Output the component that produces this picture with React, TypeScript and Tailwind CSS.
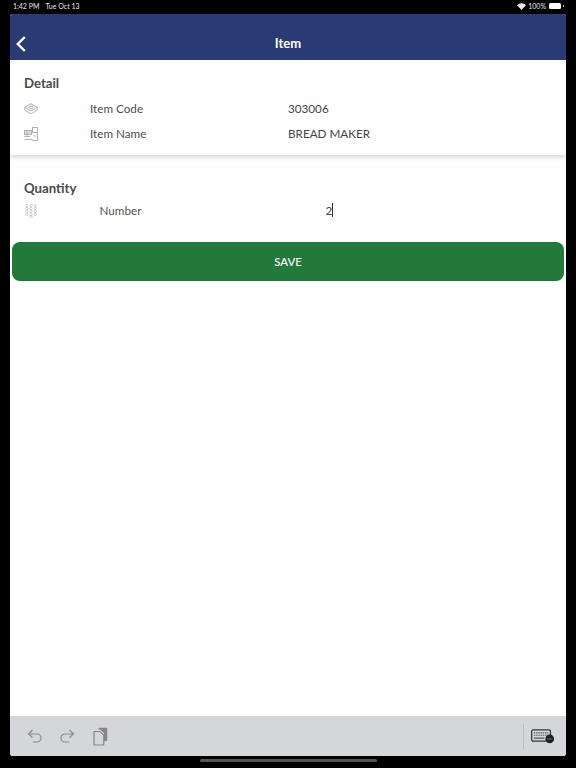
import React from "react";

const CodeIcon = () => (
  <svg width="14" height="12" viewBox="0 0 14 12" fill="none" stroke="#bdbdbd" strokeWidth="1">
    <path d="M7 .8 13.3 4.3 7 7.8.7 4.3Z" fill="#eeeeee" />
    <path d="M.7 4.3v3L7 10.9l6.3-3.6v-3" fill="#f4f4f4" />
    <path d="M7 .8 13.3 4.3 7 7.8.7 4.3Z" fill="#eeeeee" />
    <ellipse cx="7" cy="4.3" rx="2" ry="1.1" />
  </svg>
);

const NameIcon = () => (
  <svg width="14" height="14" viewBox="0 0 14 14" fill="none" stroke="#b0b0b0" strokeWidth="1">
    <rect x="8.5" y=".5" width="5" height="5" />
    <path d="M8.5 5.5h5v8h-5M11 8v2" />
    <rect x=".5" y="3.5" width="7" height="4" fill="#dddddd" />
    <path d="M.5 9.5h5.5M.5 12.5h8M3 5v5" />
  </svg>
);

const KeypadIcon = () => (
  <svg width="12" height="14" viewBox="0 0 12 14" fill="none" stroke="#c4c4c4" strokeWidth="0.8">
    {[0, 1, 2, 3].flatMap((r) =>
      [0, 1, 2].map((c) => <circle key={`${r}-${c}`} cx={1.8 + c * 4.2} cy={1.5 + r * 3} r="1.2" />)
    )}
    <circle cx="6" cy="12.6" r="1.2" />
  </svg>
);

function Row({ icon, label, value }: { icon: React.ReactNode; label: string; value: string }) {
  return (
    <div className="flex h-[25px] items-center">
      <div className="flex w-[66px] justify-start">{icon}</div>
      <div className="w-[198px] text-[11.7px] text-[#4d4d4d]">{label}</div>
      <div className="text-[11.7px] text-[#444444]">{value}</div>
    </div>
  );
}

export default function App() {
  return (
    <div className="flex h-[768px] w-[576px] flex-col overflow-hidden bg-black font-['Lato','Noto_Sans',sans-serif]">
      <div className="flex h-[12px] items-center justify-between pl-[13px] pr-[12px] text-[7px] text-[#e8e8e8]">
        <div className="flex gap-[6px]">
          <span>1:42 PM</span>
          <span>Tue Oct 13</span>
        </div>
        <div className="flex items-center gap-[2px]">
          <svg width="9" height="7" viewBox="0 0 18 14" fill="#e8e8e8">
            <path d="M9 14 0 4.5C5-1 13-1 18 4.5Z" />
          </svg>
          <span>100%</span>
          <div className="ml-px h-[6px] w-[12px] rounded-[1.5px] bg-white" />
          <div className="h-[2px] w-px bg-[#aaaaaa]" />
        </div>
      </div>
      <div className="h-[2px]" />

      <div className="mx-[10px] flex h-[742px] flex-col overflow-hidden rounded-[3px] bg-white">
        <div className="relative flex h-[46px] items-end justify-center bg-[#2a3a75] pb-[9px]">
          <svg className="absolute left-[5px] top-[22px]" width="12" height="16" viewBox="0 0 12 16" fill="none" stroke="white" strokeWidth="2.4">
            <path d="M9.8 1 2.8 8l7 7" />
          </svg>
          <span className="text-[13px] font-bold leading-4 text-white">Item</span>
        </div>

        <div className="h-[95px] bg-white pl-[14px] pt-[15px] shadow-[0_2px_5px_rgba(0,0,0,0.18)]">
          <div className="mb-[4px] h-[17px] text-[13.2px] font-bold leading-[17px] text-[#4a4a4a]">Detail</div>
          <Row icon={<CodeIcon />} label="Item Code" value="303006" />
          <Row icon={<NameIcon />} label="Item Name" value="BREAD MAKER" />
        </div>

        <div className="pl-[14px] pt-[25px]">
          <div className="h-[17px] text-[13.2px] font-bold leading-[17px] text-[#4a4a4a]">Quantity</div>
          <div className="mt-[2px] flex h-[23px] items-center">
            <div className="flex w-[75.5px] pl-px">
              <KeypadIcon />
            </div>
            <div className="w-[226px] text-[11.7px] text-[#555555]">Number</div>
            <div className="flex items-center text-[11.7px] text-[#444444]">
              2<div className="h-[14px] w-px bg-[#333333]" />
            </div>
          </div>
        </div>

        <button className="mx-[2px] mt-[20px] flex h-[39px] items-center justify-center rounded-[8px] bg-[#217a3a] text-[11.4px] font-medium text-white">
          SAVE
        </button>

        <div className="flex-1" />

        <div className="flex h-[40px] items-center justify-between bg-[#d5d6da] pl-[17px] pr-[11px]">
          <div className="flex items-center gap-[16px] text-[#8b8b8f]">
            <svg width="16" height="14" viewBox="0 0 16 14" fill="none" stroke="currentColor" strokeWidth="1.2">
              <path d="M5.5 1 1.5 5l4 3.5M1.5 5H10a4 4 0 0 1 0 8H6" />
            </svg>
            <svg width="16" height="14" viewBox="0 0 16 14" fill="none" stroke="currentColor" strokeWidth="1.2">
              <path d="M10.5 1l4 4-4 3.5M14.5 5H6a4 4 0 0 0 0 8h4" />
            </svg>
            <svg className="ml-[2px]" width="15" height="19" viewBox="0 0 15 19" fill="none">
              <path d="M5 2.5 6 .8h7.2a1 1 0 0 1 1 1V13a1 1 0 0 1-1 1H11V6L7 2.5Z" fill="#85858a" />
              <path d="M1.5 4.5H7l3.8 3.5v9a1 1 0 0 1-1 1H2a1 1 0 0 1-1-1V5a.6.6 0 0 1 .5-.5Z" stroke="#85858a" strokeWidth="1.2" />
            </svg>
          </div>
          <div className="flex items-center gap-[7px]">
            <div className="h-[25px] w-px bg-[#bcbdc1]" />
            <svg width="24" height="15" viewBox="0 0 25 15" fill="none">
              <rect x=".7" y=".7" width="19.6" height="11.6" rx="1.5" stroke="#333338" strokeWidth="1.3" />
              <path d="M3 3.8h15M3 6.2h15" stroke="#55555a" strokeWidth="1.2" strokeDasharray="1.5 0.8" />
              <path d="M3 9.2h11" stroke="#55555a" strokeWidth="1.3" />
              <circle cx="19.5" cy="10" r="4.5" fill="#222226" />
              <path d="M17 10h5" stroke="#9a9a9a" strokeWidth="1" strokeDasharray="1 .6" />
            </svg>
          </div>
        </div>
      </div>

      <div className="flex flex-1 justify-center pt-[3px]">
        <div className="h-[3px] w-[177px] rounded-full bg-[#555555]" />
      </div>
    </div>
  );
}
